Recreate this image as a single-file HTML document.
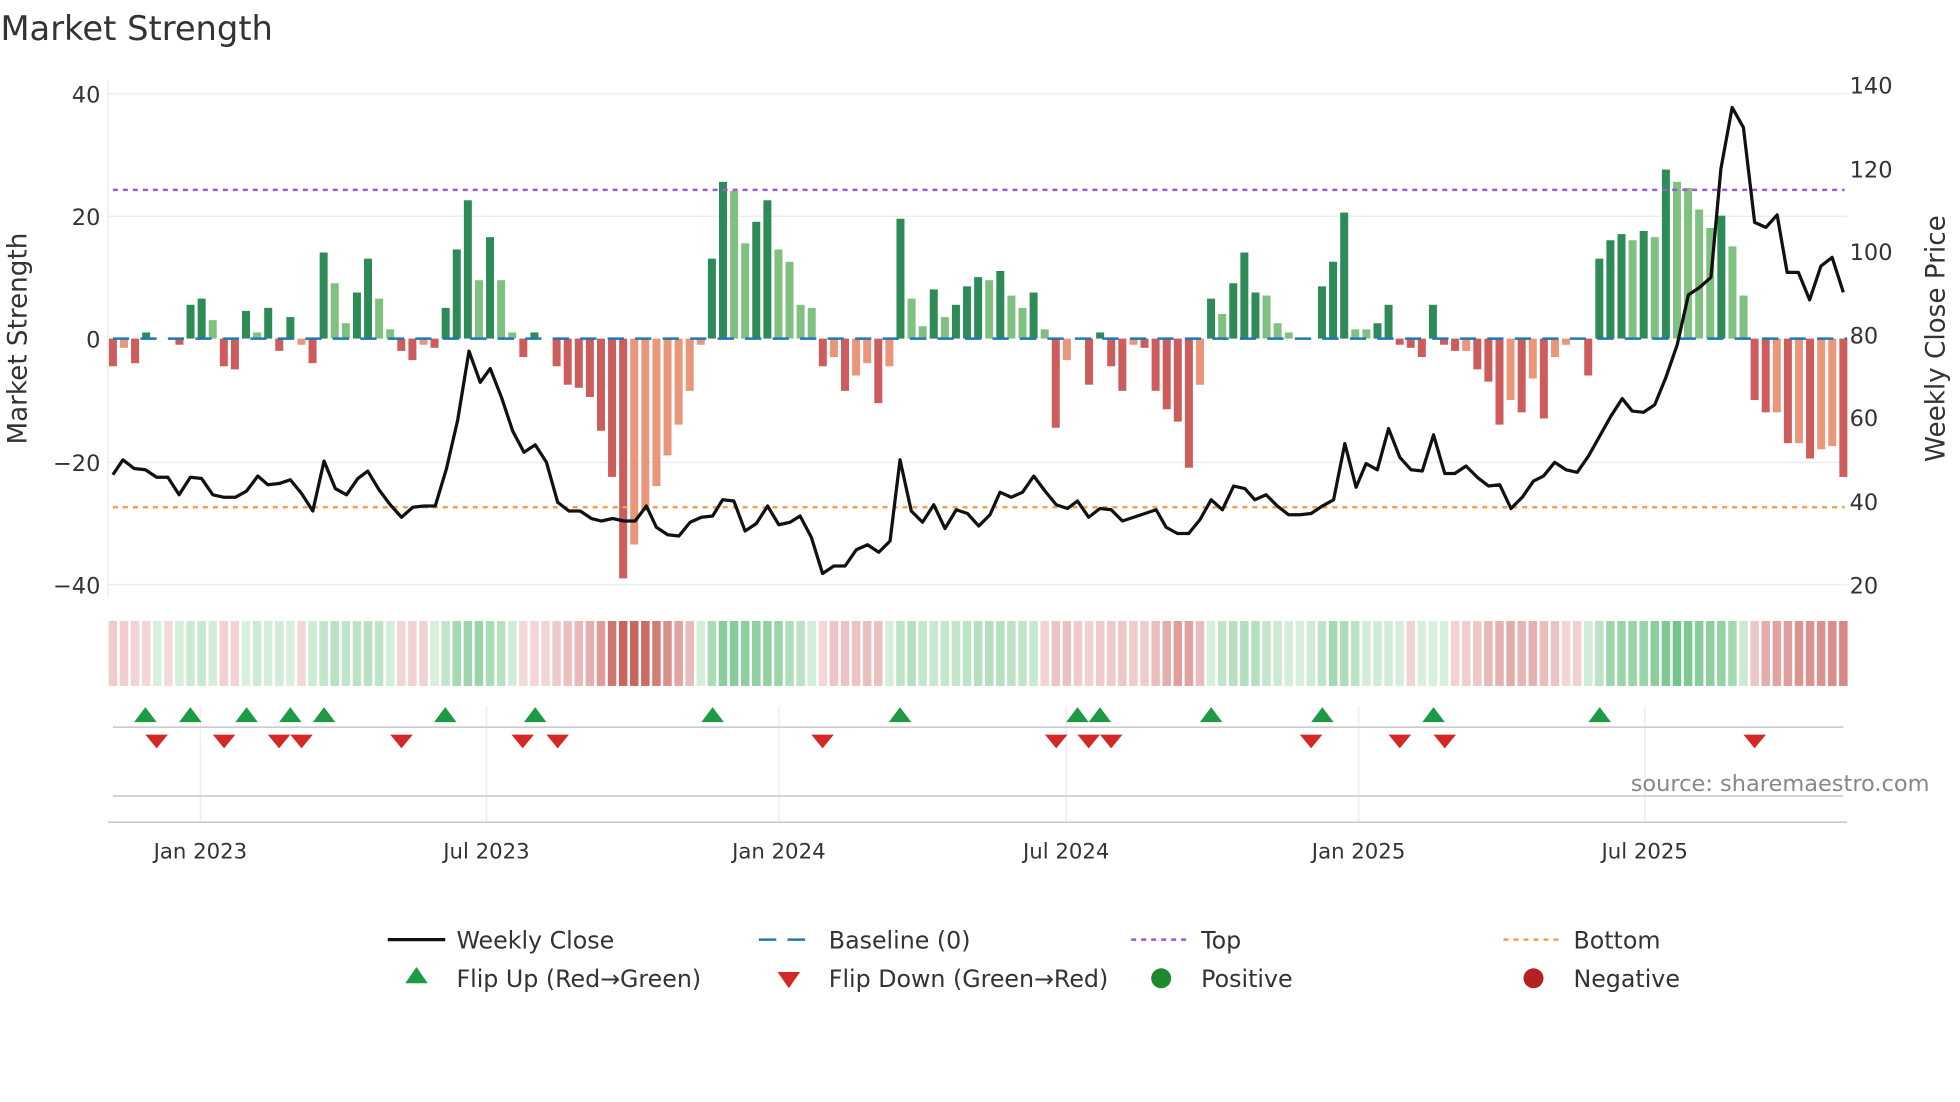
<!DOCTYPE html>
<html><head><meta charset="utf-8"><style>
html,body{margin:0;padding:0;background:#fff;}
svg{display:block;font-family:"DejaVu Sans","Liberation Sans",sans-serif;}
</style></head><body>
<svg id="c" width="1960" height="1102" viewBox="0 0 1568 882" xmlns="http://www.w3.org/2000/svg">
<rect width="1568" height="882" fill="#fff"/>
<text x="0" y="32" font-size="27" fill="#333">Market Strength</text>
<g stroke="#eceff2" stroke-width="1.3">
<line x1="86" y1="75" x2="1478" y2="75"/><line x1="86" y1="173" x2="1478" y2="173"/>
<line x1="86" y1="370" x2="1478" y2="370"/><line x1="86" y1="468" x2="1478" y2="468"/>
<line x1="86" y1="64" x2="86" y2="478"/>
</g>
<g font-size="18" fill="#333" text-anchor="end">
<text x="80" y="82">40</text><text x="80" y="180">20</text><text x="80" y="278">0</text>
<text x="80" y="377">−20</text><text x="80" y="475">−40</text>
</g>
<g font-size="18" fill="#333">
<text x="1480" y="75">140</text><text x="1480" y="142">120</text><text x="1480" y="208">100</text>
<text x="1480" y="275">80</text><text x="1480" y="341">60</text><text x="1480" y="408">40</text><text x="1480" y="475">20</text>
</g>
<text transform="translate(21,271) rotate(-90)" font-size="21" fill="#333" text-anchor="middle">Market Strength</text>
<text transform="translate(1556,271) rotate(-90)" font-size="21" fill="#333" text-anchor="middle">Weekly Close Price</text>
<g id="bars"></g>
<line x1="90" y1="271" x2="1478" y2="271" stroke="#1f77b4" stroke-width="2" stroke-dasharray="13 9"/>
<line x1="90" y1="152" x2="1476" y2="152" stroke="#9b59d6" stroke-width="2" stroke-dasharray="4 4"/>
<line x1="90" y1="406" x2="1476" y2="406" stroke="#f0a050" stroke-width="2" stroke-dasharray="4 4"/>
<polyline id="price" fill="none" stroke="#111" stroke-width="2.6" stroke-linejoin="round"/>
<g id="heat"></g>
<g stroke="#eceff2" stroke-width="1.3">
<line x1="160" y1="565" x2="160" y2="658"/><line x1="389" y1="565" x2="389" y2="658"/>
<line x1="623" y1="565" x2="623" y2="658"/><line x1="853" y1="565" x2="853" y2="658"/>
<line x1="1087" y1="565" x2="1087" y2="658"/><line x1="1316" y1="565" x2="1316" y2="658"/>
</g>
<line x1="90" y1="582" x2="1475" y2="582" stroke="#ccc" stroke-width="1.3"/>
<line x1="90" y1="637" x2="1475" y2="637" stroke="#ccc" stroke-width="1.3"/>
<line x1="86" y1="658" x2="1478" y2="658" stroke="#ccc" stroke-width="1.3"/>
<g id="flips"></g>
<text x="1544" y="633" font-size="18" fill="#888" text-anchor="end">source: sharemaestro.com</text>
<g font-size="17" fill="#333" text-anchor="middle">
<text x="160" y="687">Jan 2023</text><text x="389" y="687">Jul 2023</text><text x="623" y="687">Jan 2024</text>
<text x="853" y="687">Jul 2024</text><text x="1087" y="687">Jan 2025</text><text x="1316" y="687">Jul 2025</text>
</g>
<g font-size="19" fill="#333">
<line x1="310" y1="752" x2="356" y2="752" stroke="#111" stroke-width="2.6"/>
<text x="365" y="759">Weekly Close</text>
<line x1="607" y1="752" x2="652" y2="752" stroke="#1f77b4" stroke-width="2" stroke-dasharray="14 9"/>
<text x="663" y="759">Baseline (0)</text>
<line x1="905" y1="752" x2="950" y2="752" stroke="#9b59d6" stroke-width="2" stroke-dasharray="4 4"/>
<text x="961" y="759">Top</text>
<line x1="1203" y1="752" x2="1248" y2="752" stroke="#f0a050" stroke-width="2" stroke-dasharray="4 4"/>
<text x="1259" y="759">Bottom</text>
<polygon points="324,787 342,787 333,774" fill="#1e9a45"/>
<text x="365" y="790">Flip Up (Red→Green)</text>
<polygon points="622,778 640,778 631,791" fill="#d62728"/>
<text x="663" y="790">Flip Down (Green→Red)</text>
<circle cx="929" cy="783" r="8" fill="#1e8a2e"/>
<text x="961" y="790">Positive</text>
<circle cx="1227" cy="783" r="8" fill="#b22222"/>
<text x="1259" y="790">Negative</text>
</g>
</svg>
<script>
var v=[[-4.5,1],[-1.5,0],[-4,1],[1,1],[0,1],[0,1],[-1,1],[5.5,1],[6.5,1],[3,0],[-4.5,1],[-5,1],[4.5,1],[1,0],[5,1],[-2,1],[3.5,1],[-1,0],[-4,1],[14,1],[9,0],[2.5,0],[7.5,1],[13,1],[6.5,0],[1.5,0],[-2,1],[-3.5,1],[-1,0],[-1.5,1],[5,1],[14.5,1],[22.5,1],[9.5,0],[16.5,1],[9.5,0],[1,0],[-3,1],[1,1],[0,1],[-4.5,1],[-7.5,1],[-8,1],[-9.5,1],[-15,1],[-22.5,1],[-39,1],[-33.5,0],[-28,0],[-24,0],[-19,0],[-14,0],[-8.5,0],[-1,0],[13,1],[25.5,1],[24,0],[15.5,0],[19,1],[22.5,1],[14.5,0],[12.5,0],[5.5,0],[5,0],[-4.5,1],[-3,0],[-8.5,1],[-6,0],[-4,0],[-10.5,1],[-4.5,0],[19.5,1],[6.5,0],[2,0],[8,1],[3.5,0],[5.5,1],[8.5,1],[10,1],[9.5,0],[11,1],[7,0],[5,0],[7.5,1],[1.5,0],[-14.5,1],[-3.5,0],[0,1],[-7.5,1],[1,1],[-4.5,1],[-8.5,1],[-1,0],[-1.5,1],[-8.5,1],[-11.5,1],[-13.5,1],[-21,1],[-7.5,0],[6.5,1],[4,0],[9,1],[14,1],[7.5,1],[7,0],[2.5,0],[1,0],[0,1],[0,1],[8.5,1],[12.5,1],[20.5,1],[1.5,0],[1.5,0],[2.5,1],[5.5,1],[-1,1],[-1.5,1],[-3,1],[5.5,1],[-1,1],[-2,1],[-2,0],[-5,1],[-7,1],[-14,1],[-10,0],[-12,1],[-6.5,0],[-13,1],[-3,0],[-1,0],[0,1],[-6,1],[13,1],[16,1],[17,1],[16,0],[17.5,1],[16.5,0],[27.5,1],[25.5,0],[24.5,0],[21,0],[18,0],[20,1],[15,0],[7,0],[-10,1],[-12,1],[-12,0],[-17,1],[-17,0],[-19.5,1],[-18,0],[-17.5,0],[-22.5,1]];
var n=v.length,x0=90,x1=1475,st=(x1-x0)/(n-1),b='',h='';
for(var i=0;i<n;i++){var x=x0+i*st,val=v[i][0],d=v[i][1],c;
if(val>=0)c=d?'#2e8b57':'#80c080';else c=d?'#cd5c5c':'#e9967a';
var y=271-val*4.92;if(Math.abs(val)>0.01)b+='<rect x="'+(x-3.2)+'" y="'+Math.min(y,271)+'" width="6.4" height="'+Math.abs(val*4.92)+'" fill="'+c+'"/>';
var s=0;for(var k=-1;k<=1;k++){var j=Math.min(n-1,Math.max(0,i+k));s+=v[j][0];}s/=3;
var t=Math.min(1,Math.abs(s)/30),hc;
if(s>=0){hc='rgb('+Math.round(218-118*t)+','+Math.round(240-50*t)+','+Math.round(222-97*t)+')';}
else{hc='rgb('+Math.round(244-42*t)+','+Math.round(218-118*t)+','+Math.round(218-123*t)+')';}
h+='<rect x="'+(x-3.4)+'" y="497" width="6.8" height="52" fill="'+hc+'"/>';}
document.getElementById('bars').innerHTML=b;document.getElementById('heat').innerHTML=h;
var p=[90,380,98,368,107,375,116,376,125,382,134,382,143,396,152,382,161,383,170,396,179,398,188,398,197,393,206,381,214,388,223,387,232,384,241,395,250,409,259,369,268,391,277,396,286,383,294,377,303,392,312,404,321,414,330,406,339,405,348,405,357,375,366,336,375,281,384,306,392,295,401,318,410,345,419,362,428,356,437,370,446,402,455,409,464,409,473,415,481,417,490,415,499,417,508,417,517,405,525,422,534,428,543,429,552,418,561,414,570,413,578,400,587,401,596,425,605,419,614,405,623,420,632,418,640,413,649,430,658,459,667,453,676,453,685,440,694,436,703,442,712,433,720,368,729,409,738,418,747,404,756,423,765,408,774,411,783,421,792,412,800,394,809,398,818,394,827,381,836,393,845,404,854,407,862,401,871,414,880,407,889,408,898,417,907,414,916,411,925,408,933,422,942,427,951,427,960,416,969,400,978,408,987,389,996,391,1004,400,1013,396,1022,405,1031,412,1040,412,1049,411,1058,405,1067,400,1076,355,1085,390,1093,371,1102,376,1111,343,1120,366,1129,376,1138,377,1147,348,1156,379,1164,379,1173,373,1182,382,1191,389,1200,388,1209,407,1218,398,1227,385,1235,381,1244,370,1253,376,1262,378,1271,365,1280,349,1289,333,1298,319,1306,329,1315,330,1324,324,1333,302,1342,276,1351,236,1360,230,1369,222,1377,135,1386,86,1395,102,1404,178,1413,182,1422,172,1430,218,1439,218,1448,240,1457,213,1466,206,1475,234];
var ps='';for(var i=0;i<p.length;i+=2)ps+=p[i]+','+p[i+1]+' ';document.getElementById('price').setAttribute('points',ps);
var up=[116,152,197,232,259,356,428,570,720,862,880,969,1058,1147,1280],dn=[125,179,223,241,321,418,446,658,845,871,889,1049,1120,1156,1404],f='';
up.forEach(function(x){f+='<polygon points="'+(x-9)+',578 '+(x+9)+',578 '+x+',566" fill="#1e9a45"/>';});
dn.forEach(function(x){f+='<polygon points="'+(x-9)+',588 '+(x+9)+',588 '+x+',599" fill="#d62728"/>';});
document.getElementById('flips').innerHTML=f;
</script>
</body></html>
